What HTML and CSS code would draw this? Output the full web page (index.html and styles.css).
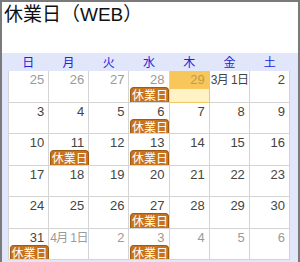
FILE: index.html
```html
<!DOCTYPE html>
<html lang="ja">
  <head>
    <meta charset="UTF-8" />
    <meta name="viewport" content="width=device-width, initial-scale=1.0" />
    <title>休業日（WEB）</title>
    <link rel="stylesheet" href="styles.css">
  </head>
  <body>
    <section class="frame">
      <h1 class="title">休業日（WEB）</h1>
      <div class="calendar">
        <nav class="week-head">
          <span>日</span><span>月</span><span>火</span><span>水</span><span>木</span><span>金</span><span>土</span>
        </nav>
        <div class="month">
          <!-- week 1 -->
          <div class="day other"><span class="num">25</span></div>
          <div class="day other"><span class="num">26</span></div>
          <div class="day other"><span class="num">27</span></div>
          <div class="day other"><span class="num">28</span><span class="badge">休業日</span></div>
          <div class="day other today"><span class="num">29</span></div>
          <div class="day"><span class="num label">3月 1日</span></div>
          <div class="day"><span class="num">2</span></div>
          <!-- week 2 -->
          <div class="day"><span class="num">3</span></div>
          <div class="day"><span class="num">4</span></div>
          <div class="day"><span class="num">5</span></div>
          <div class="day"><span class="num">6</span><span class="badge">休業日</span></div>
          <div class="day"><span class="num">7</span></div>
          <div class="day"><span class="num">8</span></div>
          <div class="day"><span class="num">9</span></div>
          <!-- week 3 -->
          <div class="day"><span class="num">10</span></div>
          <div class="day"><span class="num">11</span><span class="badge">休業日</span></div>
          <div class="day"><span class="num">12</span></div>
          <div class="day"><span class="num">13</span><span class="badge">休業日</span></div>
          <div class="day"><span class="num">14</span></div>
          <div class="day"><span class="num">15</span></div>
          <div class="day"><span class="num">16</span></div>
          <!-- week 4 -->
          <div class="day"><span class="num">17</span></div>
          <div class="day"><span class="num">18</span></div>
          <div class="day"><span class="num">19</span></div>
          <div class="day"><span class="num">20</span></div>
          <div class="day"><span class="num">21</span></div>
          <div class="day"><span class="num">22</span></div>
          <div class="day"><span class="num">23</span></div>
          <!-- week 5 -->
          <div class="day"><span class="num">24</span></div>
          <div class="day"><span class="num">25</span></div>
          <div class="day"><span class="num">26</span></div>
          <div class="day"><span class="num">27</span><span class="badge">休業日</span></div>
          <div class="day"><span class="num">28</span></div>
          <div class="day"><span class="num">29</span></div>
          <div class="day"><span class="num">30</span></div>
          <!-- week 6 -->
          <div class="day"><span class="num">31</span><span class="badge">休業日</span></div>
          <div class="day other"><span class="num label">4月 1日</span></div>
          <div class="day other"><span class="num">2</span></div>
          <div class="day other"><span class="num">3</span><span class="badge">休業日</span></div>
          <div class="day other"><span class="num">4</span></div>
          <div class="day other"><span class="num">5</span></div>
          <div class="day other"><span class="num">6</span></div>
        </div>
      </div>
    </section>
  </body>
</html>
```
FILE: styles.css
```css
body {
  font-family: "Liberation Sans", "Noto Sans CJK JP", sans-serif;
  margin: 0;
  padding: 0;
  background: #fff;
}

.frame {
  height: 262px;
  border: 2px solid #7a7a7a;
  border-bottom: none;
  box-sizing: border-box;
  overflow: hidden;
}

.title {
  margin: 0;
  height: 51px;
  padding: 2px 0 0 2px;
  box-sizing: border-box;
  font-family: "Liberation Sans", "Noto Sans CJK JP", sans-serif;
  font-size: 19px;
  font-weight: normal;
  line-height: 22px;
  color: #111;
}

.calendar {
  background: #e2e6fb;
  padding: 0 8px 0 6px;
  height: 220px;
}

.week-head {
  display: grid;
  grid-template-columns: repeat(7, 1fr);
  height: 18px;
  font-family: "Noto Sans CJK JP", sans-serif;
  font-size: 12px;
  line-height: 18px;
  text-align: center;
  color: #2222dd;
}

.month {
  display: grid;
  grid-template-columns: repeat(7, 1fr);
  grid-auto-rows: 31.5px;
  background: #fff;
  border-left: 1px solid #d4d4d4;
}

.day {
  display: flex;
  flex-direction: column;
  border-right: 1px solid #d4d4d4;
  border-bottom: 1px solid #d4d4d4;
  min-width: 0;
}

.num {
  text-align: right;
  padding: 2px 4px 0 0;
  font-size: 13px;
  line-height: 14px;
  color: #444;
  white-space: nowrap;
}

/* month change labels ("3月 1日") fill the whole cell */
.num.label {
  padding: 2px 0 0 1px;
  text-align: left;
  font-size: 12px;
  letter-spacing: -0.6px;
}

.day.other .num {
  color: #9a9a9a;
}

.day.today {
  background: #fff2c4;
  border-color: #f0c868;
}

.day.today .num {
  background: #f7c75b;
  color: #c49a4a;
  padding-bottom: 2px;
}

.badge {
  margin: auto 0 0 1px;
  width: 37px;
  height: 14px;
  border: 1px solid #9e5b12;
  border-bottom: none;
  border-radius: 4px 4px 0 0;
  background: #c8731c;
  color: #fff;
  font-family: "Noto Sans CJK JP", sans-serif;
  font-size: 12px;
  line-height: 14px;
  text-align: center;
  white-space: nowrap;
  overflow: hidden;
}
```
